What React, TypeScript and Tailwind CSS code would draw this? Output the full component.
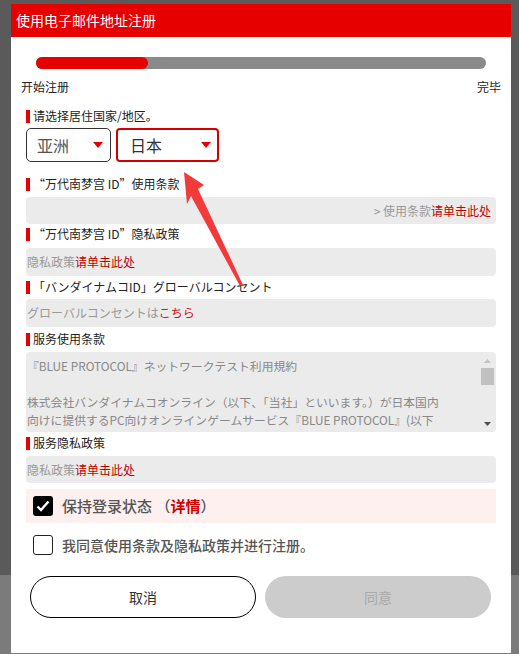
import { ReactNode } from "react"

const cjk = "font-['Noto_Sans_CJK_SC','Noto_Sans_CJK_JP',sans-serif]"
const jp = "font-['Noto_Sans_CJK_JP','Noto_Sans_CJK_SC',sans-serif]"

// Section heading with the red marker on the left
function Label({ children, className = "" }: { children: ReactNode; className?: string }) {
  return (
    <div className={`flex h-5 items-center gap-[3px] text-[12px] text-[#222] ${className}`}>
      <span className="h-[13px] w-[4px] bg-[#e60000]" />
      <span className="leading-none">{children}</span>
    </div>
  )
}

function Caret() {
  return (
    <svg width="10" height="6" viewBox="0 0 10 6">
      <path d="M0 0 L10 0 L5 6 Z" fill="#e60000" />
    </svg>
  )
}

const termsLines = [
  "『BLUE PROTOCOL』ネットワークテスト利用規約",
  "",
  "株式会社バンダイナムコオンライン（以下、「当社」といいます。）が日本国内",
  "向けに提供するPC向けオンラインゲームサービス『BLUE PROTOCOL』(以下",
  "「本サービス」といいます。）のネットワークテスト",
]

export default function App() {
  return (
    <div
      className={`relative h-[654px] w-[519px] overflow-hidden bg-[linear-gradient(to_bottom,#5a5a5a_575px,#7b7b7b_575px)] pt-[4px] pl-[11px] ${cjk}`}
    >
      <div className="flex h-[649px] w-[500px] flex-col bg-white">
        {/* Header */}
        <div className="flex h-[33px] items-center bg-[#e60000] pl-[5px] text-[14px] text-white">
          使用电子邮件地址注册
        </div>

        {/* Progress */}
        <div className="mx-[25px] mt-[20px] h-[12px] rounded-full bg-[#8a8a8a]">
          <div className="h-full w-[112px] rounded-full bg-[#e60000]" />
        </div>
        <div className="mt-[9px] flex h-[18px] items-center justify-between px-[10px] text-[12px] text-[#222]">
          <span>开始注册</span>
          <span>完毕</span>
        </div>

        <div className="flex flex-col px-[15px]">
          <Label className="mt-[10px]">请选择居住国家/地区。</Label>
          <div className="mt-[2px] flex gap-[5px]">
            <div className="flex h-[34px] w-[85px] items-center justify-between rounded-[5px] border border-[#333] pr-[7px] pl-[10px] text-[16px] text-[#555]">
              <span>亚洲</span>
              <Caret />
            </div>
            <div className="flex h-[34px] w-[103px] items-center justify-between rounded-[4px] border-2 border-[#d40000] pr-[6px] pl-[12px] text-[16px] text-[#333]">
              <span>日本</span>
              <Caret />
            </div>
          </div>

          <Label className="mt-[12px]">“万代南梦宫 ID”使用条款</Label>
          <div className="mt-[3px] flex h-[27px] items-center justify-end rounded-[4px] bg-[#ebebeb] pr-[5px] text-[12px] text-[#999]">
            &gt; 使用条款<span className="text-[#c00000]">请单击此处</span>
          </div>

          <Label>“万代南梦宫 ID”隐私政策</Label>
          <div className="mt-[4px] flex h-[28px] items-center rounded-[4px] bg-[#ebebeb] pl-[1px] text-[12px] text-[#999]">
            隐私政策<span className="text-[#c00000]">请单击此处</span>
          </div>

          <Label className={`mt-[1px] ${jp}`}>「バンダイナムコID」グローバルコンセント</Label>
          <div className={`mt-[2px] flex h-[28px] items-center rounded-[4px] bg-[#ebebeb] pl-[1px] text-[12px] text-[#999] ${jp}`}>
            グローバルコンセントは<span className="text-[#d01010]">こちら</span>
          </div>

          <Label className="mt-[2px]">服务使用条款</Label>
          <div className={`mt-[3px] flex h-[80px] overflow-hidden rounded-[4px] bg-[#ebebeb] ${jp}`}>
            <div className="h-[80px] flex-1 overflow-hidden pt-[5px] pl-[1px] text-[11.8px] leading-[18px] text-[#888]">
              {termsLines.map((line, i) => (
                <p key={i} className="h-[18px] whitespace-nowrap">
                  {line}
                </p>
              ))}
            </div>
            {/* fake scrollbar */}
            <div className="flex w-[17px] flex-col items-center">
              <svg className="mt-[7px]" width="7" height="4" viewBox="0 0 7 4">
                <path d="M0 4 L7 4 L3.5 0 Z" fill="#c4c4c4" />
              </svg>
              <div className="mt-[5px] h-[17px] w-[13px] bg-[#c1c1c1]" />
              <div className="flex-1" />
              <svg className="mb-[6px]" width="7" height="4" viewBox="0 0 7 4">
                <path d="M0 0 L7 0 L3.5 4 Z" fill="#505050" />
              </svg>
            </div>
          </div>

          <Label className="mt-[1px]">服务隐私政策</Label>
          <div className="mt-[3px] flex h-[27px] items-center rounded-[4px] bg-[#ebebeb] pl-[1px] text-[12px] text-[#999]">
            隐私政策<span className="text-[#c00000]">请单击此处</span>
          </div>

          <div className="mt-[6px] flex h-[34px] items-center gap-[9px] bg-[#fff0f0] pl-[7px] text-[15px] font-medium text-[#555]">
            <div className="flex h-[20px] w-[20px] items-center justify-center rounded-[3px] bg-black">
              <svg width="14" height="12" viewBox="0 0 14 12">
                <path d="M1.5 6.5 L5 10 L12.5 1.5" stroke="white" strokeWidth="2.4" fill="none" />
              </svg>
            </div>
            <span>
              保持登录状态 （<span className="font-bold text-[#d00000]">详情</span>）
            </span>
          </div>

          <div className="mt-[12px] flex h-[20px] items-center gap-[9px] pl-[7px] text-[14px] font-medium text-[#555]">
            <div className="h-[20px] w-[20px] rounded-[3px] border-[1.5px] border-[#222] bg-white" />
            <span>我同意使用条款及隐私政策并进行注册。</span>
          </div>

          <div className="mt-[21px] flex gap-[9px] px-[4px]">
            <button className="h-[42px] w-[226px] rounded-full border-[1.5px] border-black bg-white text-[14px] text-[#333]">
              取消
            </button>
            <button className="h-[42px] w-[226px] rounded-full bg-[#cccccc] text-[14px] text-[#aaa]">
              同意
            </button>
          </div>
        </div>
      </div>

      {/* annotation arrow */}
      <svg className="pointer-events-none absolute top-0 left-0" width="519" height="654" viewBox="0 0 519 654">
        <path
          d="M184 172 L204 185 L198 189 L243 285 L240 286 L191 196 L187 204 Z"
          fill="#f23a3a"
        />
      </svg>
    </div>
  )
}
